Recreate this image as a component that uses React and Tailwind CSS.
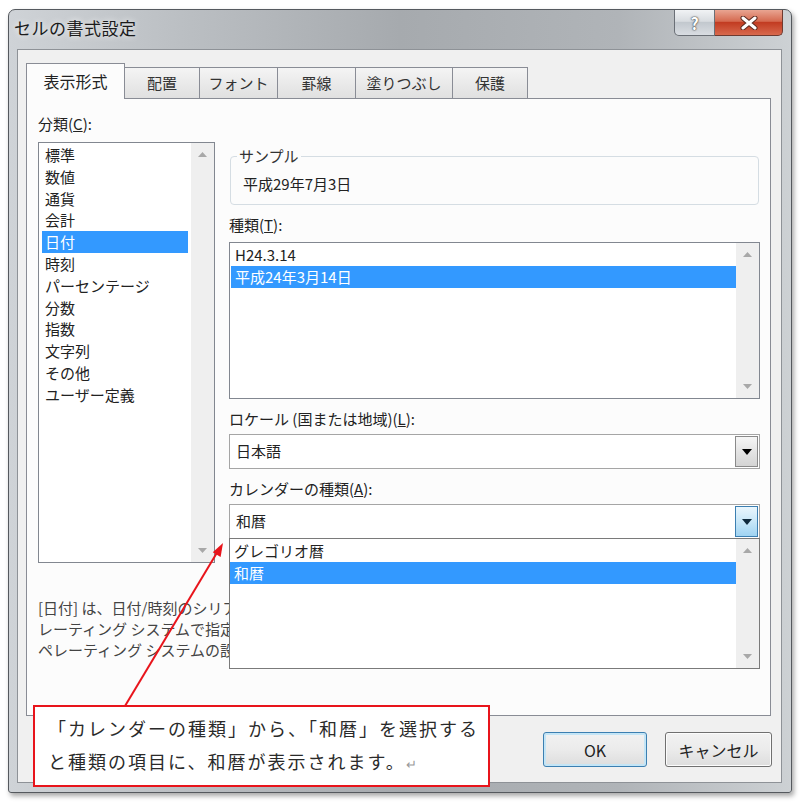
import React from 'react';

const categories = ['標準', '数値', '通貨', '会計', '日付', '時刻', 'パーセンテージ', '分数', '指数', '文字列', 'その他', 'ユーザー定義'];
const tabs = [
  { label: '配置', w: 'w-[75px]' },
  { label: 'フォント', w: 'w-[78px]' },
  { label: '罫線', w: 'w-[78px]' },
  { label: '塗りつぶし', w: 'w-[97px]' },
  { label: '保護', w: 'w-[75px]' },
];

const ScrollBar = () => (
  <div className="w-[23px] bg-[#efefef] flex flex-col justify-between items-center py-[9px]">
    <svg width="9" height="5" viewBox="0 0 9 5"><polygon points="0,5 9,5 4.5,0" fill="#a8a8a8" /></svg>
    <svg width="9" height="5" viewBox="0 0 9 5"><polygon points="0,0 9,0 4.5,5" fill="#a8a8a8" /></svg>
  </div>
);

const Arrow = ({ color = '#000' }) => (
  <svg width="10" height="6" viewBox="0 0 10 6"><polygon points="0,0 10,0 5,6" fill={color} /></svg>
);

export default function App() {
  return (
    <div className="relative w-[800px] h-[805px] bg-white pl-[8px] pt-[9px] font-['Noto_Sans_CJK_JP',sans-serif] text-[#222]">
      {/* window */}
      <div className="w-[784px] h-[784px] flex flex-col rounded-t-[7px] rounded-b-[3px] border border-[#55595e] bg-[linear-gradient(90deg,#cfd3d7_0%,#bbbfc3_22%,#a6aaae_50%,#b0b4b8_78%,#cdd1d4_100%)] shadow-[2px_3px_5px_rgba(0,0,0,0.35)]">
        <div className="h-[39px] flex justify-between items-start">
          <div className="pl-[5px] h-[36px] flex items-center text-[17px] tracking-[0.5px] text-[#1b1b1b] [text-shadow:0_0_6px_#fff]">セルの書式設定</div>
          <div className="flex mr-[8px]">
            <div className="w-[41px] h-[26px] border border-t-0 border-[#6a6f76] rounded-bl-[5px] bg-[linear-gradient(#f1f3f5,#d8dce0_45%,#c2c8ce_50%,#d9dde2)] flex items-center justify-center text-white font-bold text-[16px] [text-shadow:0_0_2px_#333,0_0_1px_#333]">?</div>
            <div className="w-[68px] h-[26px] border border-t-0 border-l-0 border-[#6e3a30] rounded-br-[5px] bg-[linear-gradient(#e9a592,#d56a50_45%,#c23c22_50%,#d8694d)] flex items-center justify-center">
              <svg width="18" height="14" viewBox="0 0 18 14">
                <path d="M3 2 L15 12 M15 2 L3 12" stroke="#5a2a20" strokeWidth="5" strokeLinecap="round" />
                <path d="M3 2 L15 12 M15 2 L3 12" stroke="#fff" strokeWidth="3" strokeLinecap="round" />
              </svg>
            </div>
          </div>
        </div>

        {/* client area */}
        <div className="ml-[8px] w-[765px] h-[734px] border border-[#8e9297] bg-[#f0f0f0] pl-[8px] pt-[13px] flex flex-col">
          <div className="h-[35px] flex items-end">
            <div className="relative z-10 w-[99px] h-[36px] -mb-[1px] border border-b-0 border-[#898c95] bg-[#fcfcfc] flex items-center justify-center text-[16px] pb-[2px]">表示形式</div>
            {tabs.map((t) => (
              <div key={t.label} className={`${t.w} h-[31px] border border-l-0 border-b-0 border-[#898c95] bg-[linear-gradient(#f4f4f4,#e0e0e0)] flex items-center justify-center text-[15px] text-[#333]`}>
                {t.label}
              </div>
            ))}
          </div>

          {/* tab panel */}
          <div className="w-[745px] h-[618px] border border-[#898c95] bg-[#fcfcfc] pl-[11px] pt-[15px]">
            <div className="flex gap-[14px]">
              <div className="w-[177px]">
                <div className="h-[20px] leading-[20px] text-[15px]">分類(<u>C</u>):</div>
                <div className="mt-[8px] h-[421px] border border-[#828790] bg-white flex">
                  <div className="flex-1 pt-[1px] px-[3px]">
                    {categories.map((c) => (
                      <div key={c} className={`h-[21.8px] leading-[21.8px] text-[15px] pl-[3px] ${c === '日付' ? 'bg-[#3399ff] text-white' : ''}`}>{c}</div>
                    ))}
                  </div>
                  <ScrollBar />
                </div>
              </div>

              <div className="w-[531px] pt-[32px]">
                <fieldset className="w-[529px] ml-[1px] border border-[#d5dde3] rounded-[4px] pl-[12px] pb-[10px] pt-[8px]">
                  <legend className="-ml-[6px] px-[2px] leading-[20px] text-[15px] text-[#333]">サンプル</legend>
                  <div className="leading-[20px] text-[15px]">平成29年7月3日</div>
                </fieldset>

                <div className="mt-[10px] h-[20px] leading-[20px] text-[15px]">種類(<u>T</u>):</div>
                <div className="mt-[7px] h-[157px] border border-[#828790] bg-white flex">
                  <div className="flex-1 pt-[1px] pl-[1px]">
                    <div className="h-[21.8px] leading-[21.8px] text-[15px] pl-[4px]">H24.3.14</div>
                    <div className="h-[21.8px] leading-[21.8px] text-[15px] pl-[4px] bg-[#3399ff] text-white">平成24年3月14日</div>
                  </div>
                  <ScrollBar />
                </div>

                <div className="mt-[10px] h-[20px] leading-[20px] text-[15px]">ロケール (国または地域)(<u>L</u>):</div>
                <div className="mt-[5px] h-[35px] border border-[#a5a5a5] bg-white flex items-center justify-between pl-[6px] pr-[1px]">
                  <span className="text-[15px]">日本語</span>
                  <div className="w-[23px] h-[31px] border border-[#8a8a8a] bg-[linear-gradient(#f6f6f6,#e4e4e4_50%,#d4d4d4)] flex items-center justify-center">
                    <Arrow />
                  </div>
                </div>

                <div className="mt-[10px] h-[20px] leading-[20px] text-[15px]">カレンダーの種類(<u>A</u>):</div>
                <div className="relative z-20 mt-[5px] h-[35px] border border-[#a5a5a5] bg-white flex items-center justify-between pl-[6px] pr-[1px]">
                  <span className="text-[15px]">和暦</span>
                  <div className="w-[23px] h-[31px] border border-[#3c7fb1] bg-[linear-gradient(#eaf6fd,#c8e7f8_50%,#9fd3f2)] flex items-center justify-center">
                    <Arrow color="#0f2a3d" />
                  </div>
                  {/* open dropdown */}
                  <div className="absolute top-full -left-[1px] w-[531px] h-[131px] border border-[#7a7a7a] bg-white flex">
                    <div className="flex-1 pt-[1px]">
                      <div className="h-[21.8px] leading-[21.8px] text-[15px] pl-[4px]">グレゴリオ暦</div>
                      <div className="h-[21.8px] leading-[21.8px] text-[15px] pl-[4px] bg-[#3399ff] text-white">和暦</div>
                    </div>
                    <ScrollBar />
                  </div>
                </div>
              </div>
            </div>

            <div className="mt-[34px] whitespace-nowrap text-[15px] leading-[21px] text-[#444]">
              <div>[日付] は、日付/時刻のシリアル値を日付形式で表示します。アスタリスク (*) で始まる日付形式は、オ</div>
              <div>レーティング システムで指定されている地域の日付/時刻の設定の変更に対応します。</div>
              <div>ペレーティング システムの設定に影響されません。</div>
            </div>
          </div>

          <div className="mt-[16px] w-[746px] flex justify-end gap-[18px]">
            <div className="w-[104px] h-[35px] rounded-[3px] border border-[#3c7fb1] bg-[linear-gradient(#f2f2f2,#ebebeb_50%,#dddddd)] shadow-[inset_0_0_0_2px_#c4e5f6] flex items-center justify-center text-[16px]">OK</div>
            <div className="w-[107px] h-[35px] rounded-[3px] border border-[#707070] bg-[linear-gradient(#f2f2f2,#ebebeb_50%,#dddddd)] shadow-[inset_0_0_0_1px_#fcfcfc] flex items-center justify-center text-[16px]">キャンセル</div>
          </div>
        </div>
      </div>

      {/* annotation arrow */}
      <svg className="absolute left-0 top-0 pointer-events-none" width="800" height="805" viewBox="0 0 800 805">
        <line x1="125" y1="706" x2="218" y2="551" stroke="#e8141b" strokeWidth="2" />
        <polygon points="223,543 220.6,557 212.8,552.3" fill="#e8141b" />
      </svg>

      {/* annotation callout */}
      <div className="absolute left-[33px] top-[705px] w-[457px] h-[82px] border-2 border-[#e8141b] bg-white pl-[13px] pt-[5px] text-[18px] leading-[33px] tracking-[2px] text-[#2a2a2a]">
        <div>「カレンダーの種類」から、「和暦」を選択する</div>
        <div>と種類の項目に、和暦が表示されます。<span className="text-[13px] text-[#999]">↵</span></div>
      </div>
    </div>
  );
}
